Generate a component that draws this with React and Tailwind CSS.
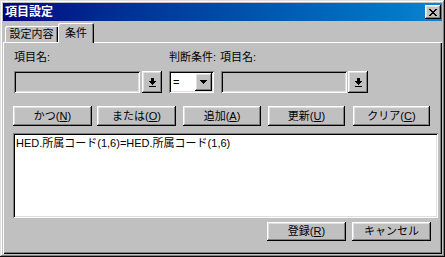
import React from "react";

const raised =
  "bg-[#c0c0c0] shadow-[inset_-1px_-1px_#000000,inset_1px_1px_#ffffff,inset_-2px_-2px_#808080,inset_2px_2px_#dfdfdf]";
const sunken =
  "shadow-[inset_1px_1px_#808080,inset_-1px_-1px_#ffffff,inset_2px_2px_#000000,inset_-2px_-2px_#dfdfdf]";

function DownBarArrow() {
  return (
    <svg width="7" height="9" viewBox="0 0 7 9" shapeRendering="crispEdges" fill="#000">
      <rect x="2" y="0" width="3" height="3" />
      <rect x="0" y="3" width="7" height="1" />
      <rect x="1" y="4" width="5" height="1" />
      <rect x="2" y="5" width="3" height="1" />
      <rect x="3" y="6" width="1" height="1" />
      <rect x="0" y="8" width="7" height="1" />
    </svg>
  );
}

function Tri() {
  return (
    <svg width="7" height="4" viewBox="0 0 7 4" shapeRendering="crispEdges" fill="#000">
      <rect x="0" y="0" width="7" height="1" />
      <rect x="1" y="1" width="5" height="1" />
      <rect x="2" y="2" width="3" height="1" />
      <rect x="3" y="3" width="1" height="1" />
    </svg>
  );
}

function CloseX() {
  return (
    <svg width="8" height="7" viewBox="0 0 8 7" shapeRendering="crispEdges" fill="#000">
      <rect x="0" y="0" width="2" height="1" />
      <rect x="6" y="0" width="2" height="1" />
      <rect x="1" y="1" width="2" height="1" />
      <rect x="5" y="1" width="2" height="1" />
      <rect x="2" y="2" width="4" height="1" />
      <rect x="3" y="3" width="2" height="1" />
      <rect x="2" y="4" width="4" height="1" />
      <rect x="1" y="5" width="2" height="1" />
      <rect x="5" y="5" width="2" height="1" />
      <rect x="0" y="6" width="2" height="1" />
      <rect x="6" y="6" width="2" height="1" />
    </svg>
  );
}

export default function App() {
  return (
    <div className="w-[445px] h-[257px] bg-[#c0c0c0] p-[3px] flex flex-col text-[11px] text-black font-['Liberation_Sans','Noto_Sans_CJK_JP',sans-serif] shadow-[inset_-1px_-1px_#0a0a0a,inset_1px_1px_#dfdfdf,inset_-2px_-2px_#808080,inset_2px_2px_#ffffff]">
      {/* Title bar */}
      <div className="h-[18px] flex items-center justify-between pl-[2px] pr-[1px] bg-gradient-to-r from-[#000080] to-[#1084d0]">
        <span className="text-white font-bold text-[12px] leading-[18px]">項目設定</span>
        <div className={`w-[16px] h-[14px] flex items-center justify-center ${raised}`}>
          <CloseX />
        </div>
      </div>

      {/* Tabs */}
      <div className="h-[21px] flex items-end pl-[2px]">
        <div className="w-[53px] h-[16px] flex items-center justify-center leading-[14px] rounded-tl-[2px] shadow-[inset_1px_1px_#ffffff,inset_-1px_0_#000000,inset_-2px_0_#808080]">
          設定内容
        </div>
        <div className="relative z-10 w-[36px] h-[20px] -mb-[1px] bg-[#c0c0c0] flex justify-center pt-[3px] leading-[14px] rounded-t-[2px] shadow-[inset_1px_1px_#ffffff,inset_-1px_0_#000000,inset_-2px_0_#808080]">
          条件
        </div>
      </div>

      {/* Panel */}
      <div className="flex-1 flex flex-col shadow-[inset_1px_1px_#ffffff,inset_-1px_-1px_#000000,inset_-2px_-2px_#808080]">
        {/* labels */}
        <div className="mt-[8px] h-[14px] leading-[14px] flex">
          <div className="ml-[11px] w-[155px]">項目名:</div>
          <div className="w-[51px]">判断条件:</div>
          <div>項目名:</div>
        </div>

        {/* controls */}
        <div className="mt-[7px] h-[22px] flex">
          <div className={`ml-[11px] w-[126px] h-[22px] bg-[#c0c0c0] ${sunken}`} />
          <div className={`ml-[2px] w-[20px] h-[22px] flex items-center justify-center ${raised}`}>
            <DownBarArrow />
          </div>
          <div className={`ml-[7px] w-[45px] h-[22px] bg-white p-[2px] flex ${sunken}`}>
            <div className="flex-1 pl-[2px] leading-[18px]">=</div>
            <div className={`w-[17px] h-[18px] flex items-center justify-center ${raised}`}>
              <Tri />
            </div>
          </div>
          <div className={`ml-[7px] w-[126px] h-[22px] bg-[#c0c0c0] ${sunken}`} />
          <div className={`ml-[1px] w-[20px] h-[22px] flex items-center justify-center ${raised}`}>
            <DownBarArrow />
          </div>
        </div>

        {/* buttons */}
        <div className="mt-[13px] h-[20px] flex">
          <div className={`ml-[10px] w-[79px] h-[20px] flex items-center justify-center ${raised}`}>
            かつ(<span className="underline">N</span>)
          </div>
          <div className={`ml-[5px] w-[79px] h-[20px] flex items-center justify-center ${raised}`}>
            または(<span className="underline">O</span>)
          </div>
          <div className={`ml-[7px] w-[78px] h-[20px] flex items-center justify-center ${raised}`}>
            追加(<span className="underline">A</span>)
          </div>
          <div className={`ml-[7px] w-[77px] h-[20px] flex items-center justify-center ${raised}`}>
            更新(<span className="underline">U</span>)
          </div>
          <div className={`ml-[8px] w-[77px] h-[20px] flex items-center justify-center ${raised}`}>
            クリア(<span className="underline">C</span>)
          </div>
        </div>

        {/* text area */}
        <div className={`mt-[7px] ml-[10px] w-[425px] h-[85px] bg-white pl-[3px] pt-[3px] leading-[14px] ${sunken}`}>
          HED.所属コード(1,6)=HED.所属コード(1,6)
        </div>

        {/* bottom buttons */}
        <div className="mt-[4px] h-[19px] flex">
          <div className={`ml-[264px] w-[79px] h-[19px] flex items-center justify-center ${raised}`}>
            登録(<span className="underline">R</span>)
          </div>
          <div className={`ml-[6px] w-[79px] h-[19px] flex items-center justify-center ${raised}`}>
            キャンセル
          </div>
        </div>
      </div>
    </div>
  );
}
